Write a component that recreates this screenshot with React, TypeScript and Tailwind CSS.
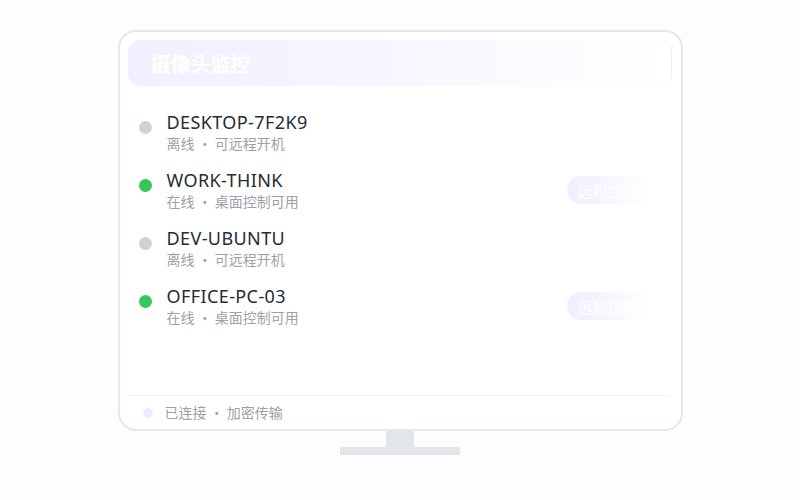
import React from "react";

const devices = [
  { name: "DESKTOP-7F2K9", online: false },
  { name: "WORK-THINK", online: true },
  { name: "DEV-UBUNTU", online: false },
  { name: "OFFICE-PC-03", online: true },
];

const cjk = { fontFamily: '"Noto Sans CJK SC", sans-serif' };

export default function App() {
  return (
    <div
      className="w-[800px] h-[500px] bg-[#fdfdfd] flex flex-col items-center pt-[30px]"
      style={{ fontFamily: '"Noto Sans", "Noto Sans CJK SC", sans-serif' }}
    >
      <div className="w-[565px] h-[401px] border-2 border-[#e4e7eb] rounded-[18px] bg-white flex flex-col pt-[8px] pl-[8px] pr-[9px]">
        <div className="h-[46px] rounded-[12px] bg-gradient-to-r from-[#f2effe] via-[#f8f6ff] to-white border-r border-[#eeeef4] flex items-center pl-[23px] pt-[2px]">
          <span className="text-white text-[20px] font-bold leading-none" style={cjk}>
            摄像头监控
          </span>
        </div>
        <div className="flex-1 flex flex-col gap-[16px] pt-[25px] pl-[11px]">
          {devices.map((d) => (
            <div key={d.name} className="flex items-center">
              <div
                className={
                  "w-[13px] h-[13px] rounded-full shrink-0 self-start mt-[10px] " +
                  (d.online ? "bg-[#34c759]" : "bg-[#cdd1d8]")
                }
              />
              <div className="ml-[15px] flex flex-col flex-1">
                <span className="text-[18px] leading-[22px] text-[#272b33] tracking-[0.4px]">{d.name}</span>
                <span className="text-[14px] leading-[20px] text-[#9ca1aa]" style={cjk}>
                  {d.online ? "在线 · 桌面控制可用" : "离线 · 可远程开机"}
                </span>
              </div>
              {d.online && (
                <div className="w-[82px] h-[28px] mr-[23px] rounded-full bg-gradient-to-r from-[#f1edff] via-[#f7f5ff] to-white flex items-center pl-[11px]">
                  <span className="text-white text-[15px] leading-none" style={cjk}>远程控制</span>
                </div>
              )}
            </div>
          ))}
        </div>
        <div className="h-[34px] border-t border-[#f0f0f4] flex items-center pl-[15px] mr-[2px]">
          <div className="w-[10px] h-[10px] rounded-full bg-[#efecfd]" />
          <span className="ml-[12px] text-[14px] text-[#9ca1aa]" style={cjk}>已连接 · 加密传输</span>
        </div>
      </div>
      <div className="w-[28px] h-[16px] bg-[#e2e6ea]" />
      <div className="w-[120px] h-[8px] bg-[#e2e6ea]" />
    </div>
  );
}
